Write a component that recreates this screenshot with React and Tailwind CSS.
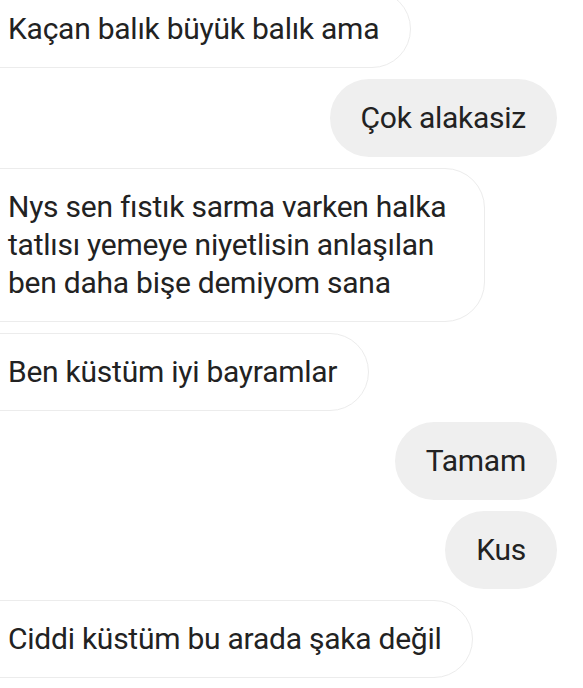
export default function App() {
  const inc =
    "self-start -ml-[40px] pl-[47px] pr-[31px] py-[18.75px] leading-[38px] bg-white border border-[#ececec] rounded-[40px]";
  const out =
    "self-end mr-[26px] px-[31px] py-[19.75px] leading-[38px] bg-[#efefef] rounded-full";
  return (
    <div
      className="w-[583px] h-[688px] overflow-hidden bg-white text-[#222222] text-[30px] tracking-[-0.25px]"
      style={{ fontFamily: "Roboto, 'Noto Sans', sans-serif" }}
    >
      <div className="flex flex-col gap-[11.5px] -mt-[10px]">
        <div className={inc}>Kaçan balık büyük balık ama</div>
        <div className={out}>Çok alakasiz</div>
        <div className={inc + " pr-[38px]"}>
          Nys sen fıstık sarma varken halka
          <br />
          tatlısı yemeye niyetlisin anlaşılan
          <br />
          ben daha bişe demiyom sana
        </div>
        <div className={inc}>Ben küstüm iyi bayramlar</div>
        <div className={out}>Tamam</div>
        <div className={out}>Kus</div>
        <div className={inc}>Ciddi küstüm bu arada şaka değil</div>
      </div>
    </div>
  );
}
